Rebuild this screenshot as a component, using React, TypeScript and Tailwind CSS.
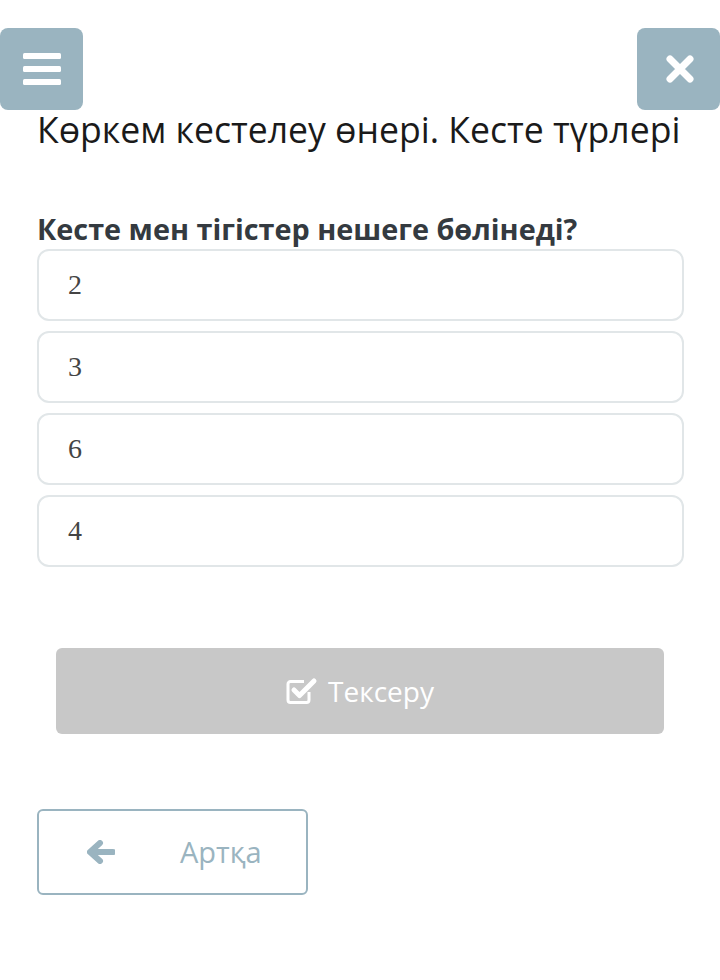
import React, { useState } from 'react';

const options = ['2', '3', '6', '4'];

const MenuIcon = () => (
  <svg width="38" height="32" viewBox="0 0 38 32">
    <rect x="0" y="0" width="38" height="6" rx="1.5" fill="#fff" />
    <rect x="0" y="13" width="38" height="6" rx="1.5" fill="#fff" />
    <rect x="0" y="26" width="38" height="6" rx="1.5" fill="#fff" />
  </svg>
);

const CloseIcon = () => (
  <svg width="30" height="30" viewBox="0 0 30 30">
    <path d="M5 5 L25 25 M25 5 L5 25" stroke="#fff" strokeWidth="7" strokeLinecap="round" />
  </svg>
);

const CheckSquareIcon = () => (
  <svg width="32" height="28" viewBox="0 0 32 28" fill="none">
    <path d="M23 15 V23 a2.5 2.5 0 0 1 -2.5 2.5 H4.5 a2.5 2.5 0 0 1 -2.5 -2.5 V7 a2.5 2.5 0 0 1 2.5 -2.5 H18" stroke="#fff" strokeWidth="3" />
    <path d="M8 13 L13.5 18.5 L28 4" stroke="#fff" strokeWidth="5" strokeLinecap="round" strokeLinejoin="round" />
  </svg>
);

const ArrowLeftIcon = () => (
  <svg width="28" height="24" viewBox="0 0 28 24">
    <path d="M3 12 L13 3 M3 12 L13 21 M4 12 H26" stroke="#9ab4c0" strokeWidth="6" strokeLinecap="round" strokeLinejoin="round" fill="none" />
  </svg>
);

export default function App() {
  const [selected, setSelected] = useState<number | null>(null);

  return (
    <div className="relative w-[720px] h-[980px] bg-white overflow-hidden font-['Open_Sans',sans-serif]">
      {/* top nav buttons */}
      <button className="absolute left-0 top-[28px] w-[83px] h-[82px] bg-[#9ab4c0] rounded-[8px] flex items-center justify-center">
        <MenuIcon />
      </button>
      <button className="absolute right-0 top-[28px] w-[83px] h-[82px] bg-[#9ab4c0] rounded-[8px] flex items-center justify-center pl-[2px]">
        <CloseIcon />
      </button>

      <div className="pt-[104px] px-[37px]">
        <h1 className="text-[35.6px] leading-[50px] text-[#1a1a1a] whitespace-nowrap">
          Көркем кестелеу өнері. Кесте түрлері
        </h1>

        <h2 className="mt-[56px] text-[28.8px] leading-[38px] font-bold text-[#343a40] whitespace-nowrap">
          Кесте мен тігістер нешеге бөлінеді?
        </h2>

        <div className="mt-[1px] flex flex-col gap-[10px] w-[647px]">
          {options.map((o, i) => (
            <div
              key={o}
              onClick={() => setSelected(i)}
              className={`h-[72px] rounded-[12px] border-2 flex items-center pl-[29px] font-['Liberation_Serif',serif] text-[28px] text-[#444] cursor-pointer ${selected === i ? 'border-[#9ab4c0]' : 'border-[#e1e6e8]'}`}
            >
              {o}
            </div>
          ))}
        </div>

        <div className="mt-[81px] px-[19px]">
          <button className="w-[608px] h-[86px] rounded-[6px] bg-[#c8c8c8] flex items-center justify-center gap-[10px] text-white text-[28px]">
            <CheckSquareIcon />
            <span>Тексеру</span>
          </button>
        </div>

        <button className="mt-[75px] w-[271px] h-[86px] rounded-[6px] border-2 border-[#9ab4c0] flex items-center pl-[48px] gap-[65px] text-[#9ab4c0] text-[29px]">
          <ArrowLeftIcon />
          <span>Артқа</span>
        </button>
      </div>
    </div>
  );
}
